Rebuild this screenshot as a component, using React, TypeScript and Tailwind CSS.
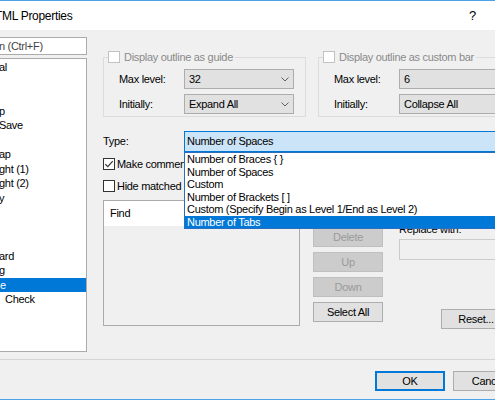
import React from 'react';

// Cropped Windows-style "HTML Properties" dialog with an open combo box

function CheckBox({ checked = false, disabled = false }: { checked?: boolean; disabled?: boolean }) {
  return (
    <span
      className={
        disabled
          ? 'w-[12px] h-[12px] shrink-0 border border-[#c2c2c2] bg-white flex items-center justify-center'
          : 'w-[12px] h-[12px] shrink-0 border border-[#333333] bg-white flex items-center justify-center'
      }
    >
      {checked && (
        <svg width="10" height="10" viewBox="0 0 10 10">
          <path d="M1.3 5.2 L3.8 7.7 L8.7 2.2" fill="none" stroke="#333333" strokeWidth="1.2" />
        </svg>
      )}
    </span>
  );
}

function Chevron() {
  return (
    <svg width="8" height="5" viewBox="0 0 8 5" className="shrink-0">
      <polyline points="0.5,0.5 4,4 7.5,0.5" fill="none" stroke="#606060" strokeWidth="1" />
    </svg>
  );
}

function Select({ value, width }: { value: string; width: string }) {
  return (
    <div className={`${width} h-[20px] border border-[#adadad] bg-[#e1e1e1] flex items-center justify-between pl-[4px] pr-[4px]`}>
      <span>{value}</span>
      <Chevron />
    </div>
  );
}

function Button({ label, disabled = false }: { label: string; disabled?: boolean }) {
  return (
    <div
      className={
        disabled
          ? 'w-[70px] h-[20px] border border-[#bfbfbf] bg-[#cccccc] text-[#9a9a9a] flex items-center justify-center'
          : 'w-[70px] h-[20px] border border-[#adadad] bg-[#e1e1e1] flex items-center justify-center'
      }
    >
      {label}
    </div>
  );
}

const treeItems = [
  'al', '', '', 'p', 'Save', '', 'ap', 'ght (1)', 'ght (2)', 'y', '', '', '', 'ard', 'g', 'e', 'Check', '', '',
];

const typeOptions = [
  'Number of Braces { }',
  'Number of Spaces',
  'Custom',
  'Number of Brackets [ ]',
  'Custom (Specify Begin as Level 1/End as Level 2)',
  'Number of Tabs',
];

function OutlineGroup({ title, max, initially, width }: { title: string; max: string; initially: string; width: string }) {
  return (
    <fieldset className={`${width} border border-[#dcdcdc] pb-[2px]`}>
      <legend className="ml-[4px] pr-[2px] flex items-center gap-[4px] text-[#8a8a8a]">
        <CheckBox disabled />
        <span className="leading-[12px]">{title}</span>
      </legend>
      <div className="flex flex-col gap-[5px] mt-[6px] pl-[15px]">
        <div className="flex items-center">
          <span className="w-[65px]">Max level:</span>
          <Select value={max} width="w-[110px]" />
        </div>
        <div className="flex items-center">
          <span className="w-[65px]">Initially:</span>
          <Select value={initially} width="w-[110px]" />
        </div>
      </div>
    </fieldset>
  );
}

export default function App() {
  return (
    <div className="w-[495px] h-[400px] overflow-hidden flex flex-col bg-[#f0f0f0] text-black font-['Liberation_Sans',Arial,sans-serif] text-[11px] tracking-[-0.3px]">
      <div className="h-px shrink-0 bg-[#4ea3e6]" />

      {/* title bar */}
      <div className="h-[29px] shrink-0 bg-white flex items-center justify-between">
        <span className="text-[12px] -ml-[5px]">TML Properties</span>
        <span className="mr-[19px] text-[13px]">?</span>
      </div>

      {/* body */}
      <div className="h-[329px] shrink-0 flex">
        {/* left navigation */}
        <div className="w-[87px] shrink-0 pt-[7px] flex flex-col gap-[3px]">
          <div className="h-[18px] border border-l-0 border-[#ababab] bg-white flex items-center text-[#444444]">
            <span className="-ml-[1px]">n (Ctrl+F)</span>
          </div>
          <div className="h-[294px] border border-l-0 border-[#ababab] bg-white pt-[1px] overflow-hidden">
            {treeItems.map((t, i) => (
              <div
                key={i}
                className={
                  t === 'e'
                    ? 'h-[14.5px] flex items-center bg-[#0078d7] text-white'
                    : t === 'Check'
                      ? 'h-[14.5px] flex items-center pl-[5px]'
                      : 'h-[14.5px] flex items-center -ml-[1px]'
                }
              >
                {t}
              </div>
            ))}
          </div>
        </div>

        {/* right content */}
        <div className="ml-[16px] flex flex-col">
          <div className="flex gap-[12px] mt-[21px]">
            <OutlineGroup title="Display outline as guide" max="32" initially="Expand All" width="w-[203px]" />
            <OutlineGroup title="Display outline as custom bar" max="6" initially="Collapse All" width="w-[210px]" />
          </div>

          <div className="flex items-center mt-[14px]">
            <span className="w-[81px]">Type:</span>
            <div className="relative">
              <div className="w-[330px] h-[21px] border border-[#0078d7] bg-[#cce4f7] flex items-center pl-[2px]">
                Number of Spaces
              </div>
              <div className="absolute left-0 top-full z-10 w-[330px] border border-[#2a6fbd] bg-white">
                {typeOptions.map((o, i) => (
                  <div
                    key={o}
                    className={
                      i === typeOptions.length - 1
                        ? 'h-[12.5px] flex items-center pl-[2px] bg-[#0078d7] text-white'
                        : 'h-[12.5px] flex items-center pl-[2px]'
                    }
                  >
                    {o}
                  </div>
                ))}
              </div>
            </div>
          </div>

          <div className="flex items-center gap-[2px] h-[14px] mt-[5px]">
            <CheckBox checked />
            <span className="whitespace-nowrap">Make comments heading bold</span>
          </div>
          <div className="flex items-center gap-[2px] h-[14px] mt-[8px]">
            <CheckBox />
            <span className="whitespace-nowrap">Hide matched strings</span>
          </div>

          <div className="flex items-start mt-[7px]">
            <div className="w-[197px] h-[126px] border border-[#ababab] bg-[#f0f0f0]">
              <div className="h-[25px] bg-white flex items-center pl-[6px]">Find</div>
            </div>

            <div className="ml-[13px] mt-[2px] flex flex-col gap-[5px]">
              <Button label="Add" />
              <Button label="Delete" disabled />
              <Button label="Up" disabled />
              <Button label="Down" disabled />
              <Button label="Select All" />
            </div>

            <div className="ml-[16px] mt-[23px] flex flex-col">
              <span className="h-[12px] leading-[12px] whitespace-nowrap">Replace with:</span>
              <div className="mt-[4px] w-[120px] h-[21px] border border-[#cccccc] bg-[#f0f0f0]" />
              <div className="mt-[49px] ml-[42px]">
                <Button label="Reset..." />
              </div>
            </div>
          </div>
        </div>
      </div>

      <div className="h-px shrink-0 bg-[#d5d5d5]" />

      {/* footer */}
      <div className="h-[39px] shrink-0 flex items-start pt-[11px] pl-[375px] gap-[8px]">
        <div className="w-[70px] h-[20px] shrink-0 border-2 border-[#0078d7] bg-[#e1e1e1] flex items-center justify-center">OK</div>
        <div className="w-[70px] h-[20px] shrink-0 border border-[#adadad] bg-[#e1e1e1] flex items-center justify-center">Cancel</div>
      </div>

      <div className="h-px shrink-0 bg-[#4ea3e6]" />
    </div>
  );
}
